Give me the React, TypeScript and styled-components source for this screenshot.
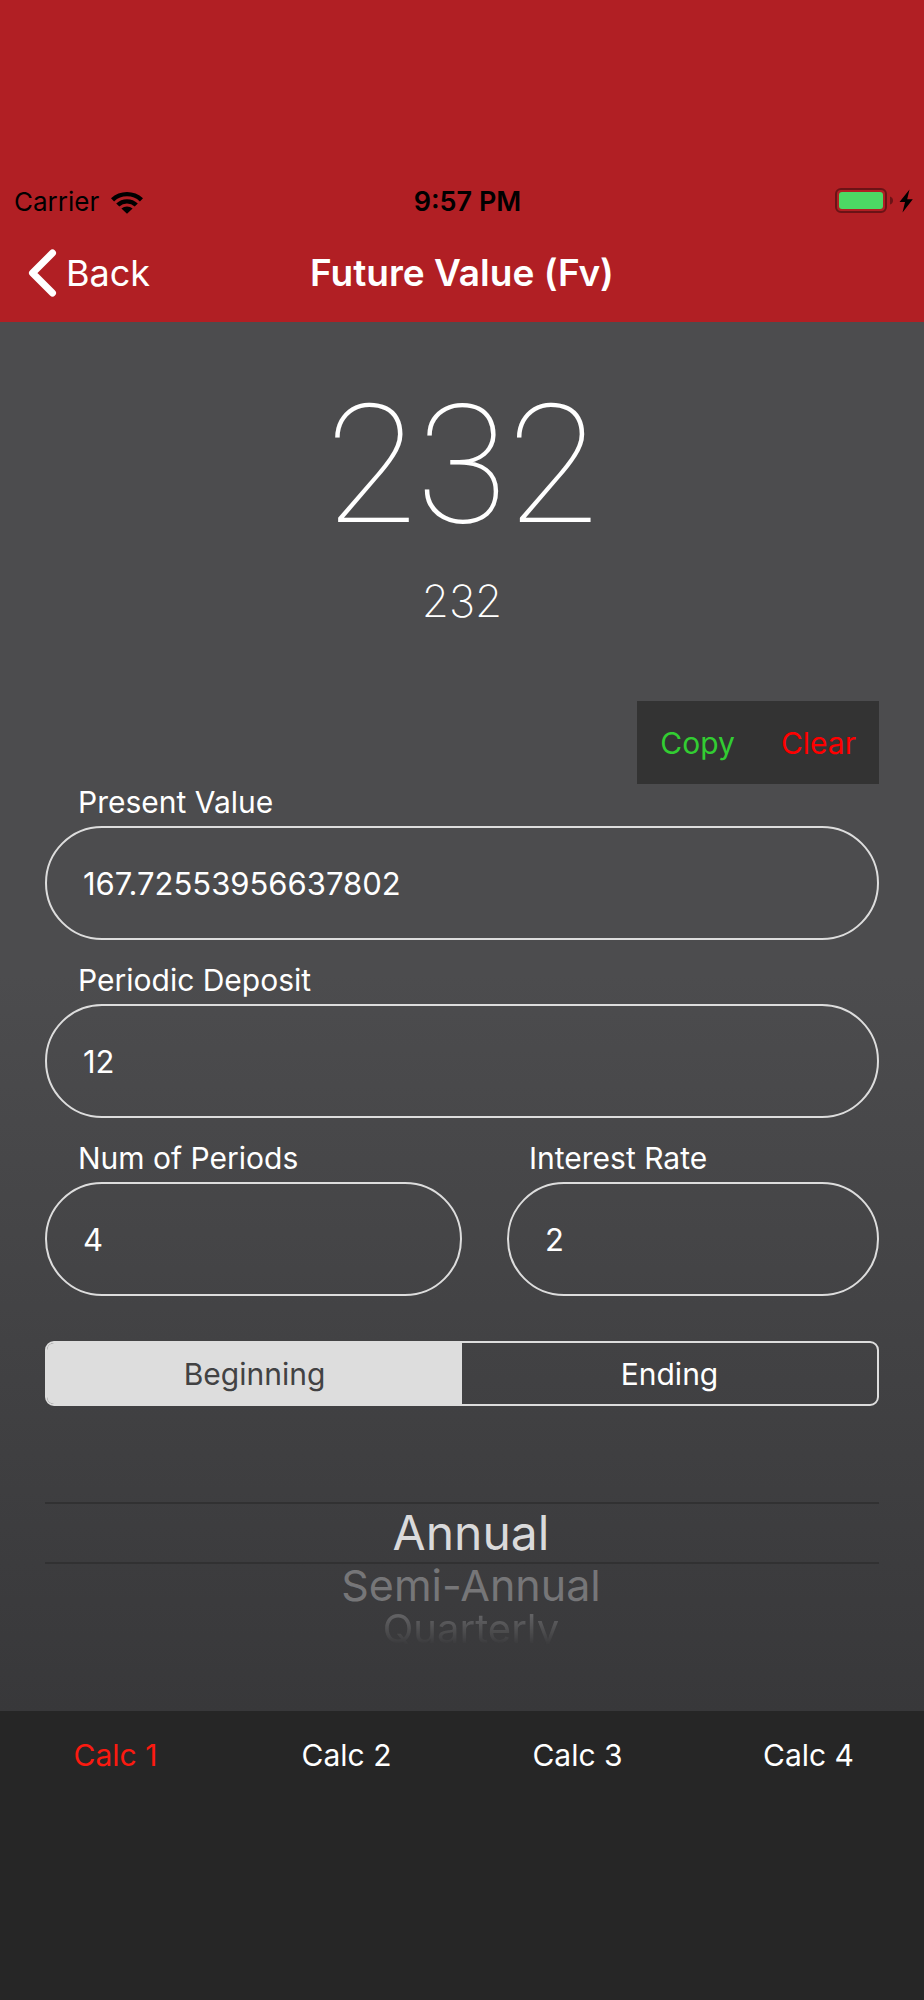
import React, { useState } from "react";
import styled, { createGlobalStyle } from "styled-components";

const GlobalStyle = createGlobalStyle`
  *, *::before, *::after { box-sizing: border-box; }
  body {
    margin: 0;
    background: #262626;
    font-family: Inter, "Liberation Sans", sans-serif;
  }
  button, input { font-family: inherit; }
`;

const Screen = styled.div`
  display: flex;
  flex-direction: column;
  min-height: 100vh;
  font-size: 30px;
  line-height: 36px;
  color: #fff;
`;

const Header = styled.header`
  padding-top: 180px;
  background: #b11f24;
`;

const StatusBar = styled.div`
  display: grid;
  grid-template-columns: 1fr auto 1fr;
  align-items: center;
  height: 44px;
  padding: 0 11px 0 14px;
  font-size: 26px;
  color: #000;
`;

const Carrier = styled.div`
  display: flex;
  align-items: center;
  gap: 12px;
`;

const Time = styled.time`
  padding-left: 8px;
  font-size: 27px;
  font-weight: 600;
`;

const Battery = styled.div`
  display: flex;
  justify-content: flex-end;
  padding-bottom: 3px;
`;

const NavBar = styled.nav`
  display: grid;
  grid-template-columns: 1fr auto 1fr;
  align-items: center;
  height: 98px;
  padding: 0 28px;
`;

const BackButton = styled.button`
  display: flex;
  align-items: center;
  gap: 9px;
  justify-self: start;
  padding: 0;
  border: 0;
  background: none;
  color: #fff;
  font-size: 36px;
  cursor: pointer;
`;

const Title = styled.h1`
  margin: 0;
  font-size: 37px;
  font-weight: 600;
`;

const Main = styled.main`
  display: flex;
  flex-direction: column;
  padding: 62px 45px 61px;
  background: linear-gradient(#4c4c4e 0%, #4c4c4e 47%, #38383a 100%);
`;

const Result = styled.output`
  font-family: Roboto, Inter, sans-serif;
  font-size: 166px;
  line-height: 164px;
  font-weight: 100;
  text-align: center;
`;

const SubResult = styled.p`
  margin: 30px 0 76px;
  font-size: 44px;
  line-height: 47px;
  font-weight: 200;
  text-align: center;
`;

const Actions = styled.div`
  display: flex;
  align-self: flex-end;
  background: #333;
`;

const ActionButton = styled.button<{ $color: string }>`
  height: 83px;
  padding: 0 23px;
  border: 0;
  background: none;
  color: ${(p) => p.$color};
  font-size: 30px;
  cursor: pointer;
`;

const Form = styled.form`
  display: flex;
  flex-direction: column;
`;

const Fields = styled.div`
  display: grid;
  grid-template-columns: 417fr 372fr;
  gap: 22px 45px;
`;

const Field = styled.div<{ $wide?: boolean }>`
  display: flex;
  flex-direction: column;
  gap: 6px;
  min-width: 0;
  grid-column: ${(p) => (p.$wide ? "1 / -1" : "auto")};
`;

const FieldLabel = styled.label<{ $indent: number }>`
  padding-left: ${(p) => p.$indent}px;
`;

const FieldInput = styled.input`
  width: 100%;
  height: 114px;
  padding: 0 36px;
  border: 2px solid #ddd;
  border-radius: 57px;
  background: none;
  color: #fff;
  font-size: 31px;
  outline: none;
`;

const Segments = styled.div`
  display: grid;
  grid-template-columns: 1fr 1fr;
  margin-top: 45px;
  border: 2px solid #ddd;
  border-radius: 9px;
  overflow: hidden;
`;

const HiddenRadio = styled.input`
  appearance: none;
  width: 0;
  height: 0;
  margin: 0;
`;

const Segment = styled.label<{ $active: boolean }>`
  display: flex;
  align-items: center;
  justify-content: center;
  height: 61px;
  background: ${(p) => (p.$active ? "#ddd" : "transparent")};
  color: ${(p) => (p.$active ? "#424243" : "#fff")};
  cursor: pointer;
`;

const Picker = styled.div`
  display: flex;
  flex-direction: column;
  margin-top: 96px;
  padding-left: 18px;
`;

const pickerText = {
  selected: "color: #dadadb; font-size: 48px; line-height: 58px;",
  near: "color: #767678; font-size: 43px; line-height: 43px;",
  far: `
    color: #626264;
    font-size: 40px;
    line-height: 43px;
    mask-image: linear-gradient(#000 20%, transparent 88%);
  `,
};

const PickerRow = styled.label<{ $depth: keyof typeof pickerText }>`
  display: flex;
  justify-content: center;
  cursor: pointer;
  ${(p) => pickerText[p.$depth]}
`;

const PickerLine = styled.hr`
  align-self: stretch;
  height: 2px;
  margin: 0 0 0 -18px;
  border: 0;
  background: #313132;
`;

const TabBar = styled.nav`
  display: grid;
  grid-template-columns: repeat(4, 1fr);
  align-content: start;
  flex: 1;
  padding: 26px 0;
  background: #262626;
`;

const Tab = styled.a<{ $active: boolean }>`
  text-align: center;
  text-decoration: none;
  color: ${(p) => (p.$active ? "#fb1a10" : "#fff")};
`;

const WifiIcon = () => (
  <svg width="32" height="23" viewBox="0 0 32 23" aria-hidden="true">
    <path d="M0 7.2A23.5 23.5 0 0 1 32 7.2L28.9 10.4A19 19 0 0 0 3.1 10.4Z" fill="#000" />
    <path d="M5.2 12.4A15.8 15.8 0 0 1 26.8 12.4L23.7 15.5A11.4 11.4 0 0 0 8.3 15.5Z" fill="#000" />
    <path d="M10.4 17.6A8.3 8.3 0 0 1 21.6 17.6L16 22.8Z" fill="#000" />
  </svg>
);

const BatteryIcon = () => (
  <svg width="78" height="25" viewBox="0 0 78 25" aria-hidden="true">
    <rect x="1" y="1" width="50" height="23" rx="5" fill="none" stroke="#6b1316" strokeWidth="2" />
    <rect x="4" y="4" width="44" height="17" rx="3" fill="#4cd964" />
    <path d="M55 8.5Q58 9.5 58 12.5T55 16.5Z" fill="#6b1316" />
    <path d="M74.5 1.5L64.5 14H70L67.5 24.5L77.8 11.2H72.2Z" fill="#000" />
  </svg>
);

const BackIcon = () => (
  <svg width="29" height="48" viewBox="0 0 29 48" aria-hidden="true">
    <path d="M24.5 4L4.5 24L24.5 44" fill="none" stroke="#fff" strokeWidth="7" strokeLinecap="round" strokeLinejoin="round" />
  </svg>
);

const FIELDS = [
  { id: "present-value", label: "Present Value", value: "167.72553956637802", wide: true, indent: 33 },
  { id: "periodic-deposit", label: "Periodic Deposit", value: "12", wide: true, indent: 33 },
  { id: "num-periods", label: "Num of Periods", value: "4", wide: false, indent: 33 },
  { id: "interest-rate", label: "Interest Rate", value: "2", wide: false, indent: 22 },
];

const TIMINGS = ["Beginning", "Ending"];
const TABS = ["Calc 1", "Calc 2", "Calc 3", "Calc 4"];

export default function App() {
  const [timing, setTiming] = useState("Beginning");
  const [tab, setTab] = useState("Calc 1");

  return (
    <Screen>
      <GlobalStyle />
      <Header>
        <StatusBar>
          <Carrier>
            Carrier
            <WifiIcon />
          </Carrier>
          <Time>9:57 PM</Time>
          <Battery>
            <BatteryIcon />
          </Battery>
        </StatusBar>
        <NavBar>
          <BackButton type="button">
            <BackIcon />
            Back
          </BackButton>
          <Title>Future Value (Fv)</Title>
        </NavBar>
      </Header>

      <Main>
        <Result>232</Result>
        <SubResult>232</SubResult>
        <Actions>
          <ActionButton type="button" $color="#32cd32">Copy</ActionButton>
          <ActionButton type="button" $color="#ff0000">Clear</ActionButton>
        </Actions>
        <Form>
          <Fields>
            {FIELDS.map((f) => (
              <Field key={f.id} $wide={f.wide}>
                <FieldLabel htmlFor={f.id} $indent={f.indent}>{f.label}</FieldLabel>
                <FieldInput id={f.id} inputMode="decimal" defaultValue={f.value} />
              </Field>
            ))}
          </Fields>
          <Segments role="radiogroup" aria-label="Payment timing">
            {TIMINGS.map((t) => (
              <Segment key={t} $active={t === timing}>
                <HiddenRadio type="radio" name="timing" checked={t === timing} onChange={() => setTiming(t)} />
                {t}
              </Segment>
            ))}
          </Segments>
          <Picker role="radiogroup" aria-label="Compounding">
            <PickerLine />
            <PickerRow $depth="selected">
              <HiddenRadio type="radio" name="compounding" defaultChecked />
              Annual
            </PickerRow>
            <PickerLine />
            <PickerRow $depth="near">
              <HiddenRadio type="radio" name="compounding" />
              Semi-Annual
            </PickerRow>
            <PickerRow $depth="far">
              <HiddenRadio type="radio" name="compounding" />
              Quarterly
            </PickerRow>
          </Picker>
        </Form>
      </Main>

      <TabBar>
        {TABS.map((t) => (
          <Tab key={t} href="#" $active={t === tab} onClick={() => setTab(t)}>
            {t}
          </Tab>
        ))}
      </TabBar>
    </Screen>
  );
}
